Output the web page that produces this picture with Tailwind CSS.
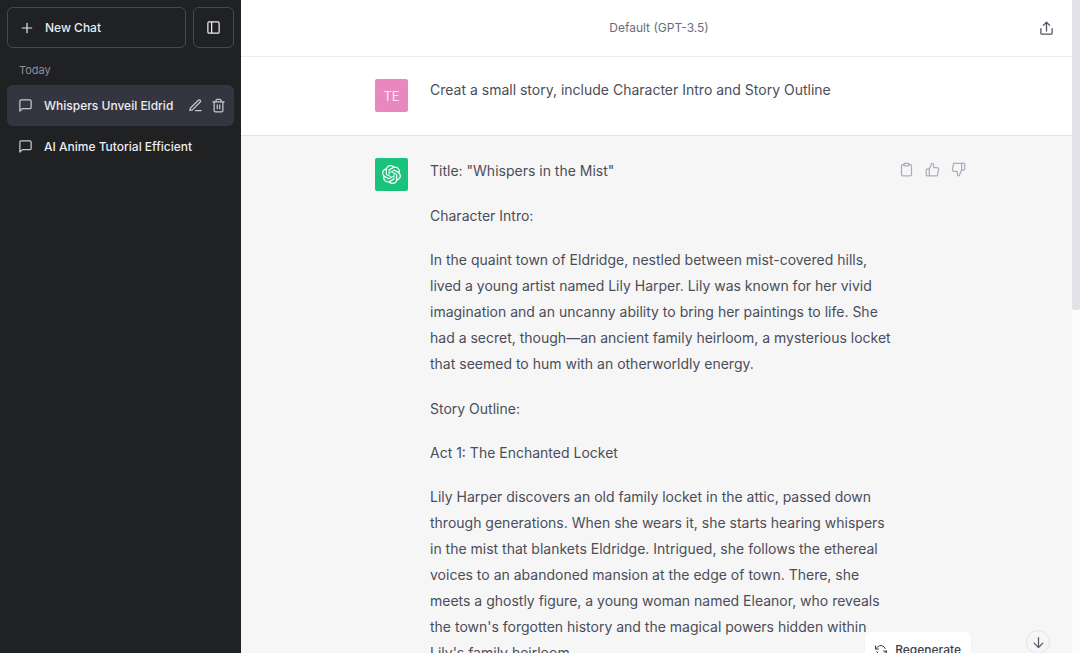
<!DOCTYPE html>
<html lang="en">
<head>
    <meta charset="UTF-8">
    <meta name="viewport" content="width=device-width, initial-scale=1.0">
    <title>Whispers Unveil Eldrid</title>
    <script src="https://cdn.jsdelivr.net/npm/@tailwindcss/browser@4"></script>
</head>
<body class="flex h-screen overflow-hidden bg-white font-['Inter','Liberation_Sans',sans-serif] text-[14px] leading-[26px] text-[#4b4d58]">
    <!-- Sidebar -->
    <aside class="w-[241px] shrink-0 bg-[#202123] p-[7px] text-[#ececf1]">
        <div class="flex gap-[7px]">
            <button class="flex h-[41px] flex-1 items-center gap-[11px] rounded-md border border-[#47484c] pl-3 text-[12px] font-medium">
                <svg class="size-[14px]" viewBox="0 0 24 24" fill="none" stroke="currentColor" stroke-width="2" stroke-linecap="round"><path d="M12 4v16M4 12h16"/></svg>
                New Chat
            </button>
            <button class="flex size-[41px] items-center justify-center rounded-md border border-[#47484c]" aria-label="Hide sidebar">
                <svg class="size-[15px]" viewBox="0 0 24 24" fill="none" stroke="currentColor" stroke-width="2"><rect x="3" y="3" width="18" height="18" rx="2"/><path d="M9 3v18"/></svg>
            </button>
        </div>
        <h2 class="mt-[14px] mb-[7px] pl-3 text-[11px] leading-4 text-[#8e8ea0]">Today</h2>
        <nav class="text-[12px] font-medium">
            <div class="flex h-[41px] items-center rounded-md bg-[#343541] pr-2">
                <a href="#" class="flex flex-1 items-center gap-[11px] pl-[11px] whitespace-nowrap">
                    <svg class="size-[15px] text-[#c5c5d2]" viewBox="0 0 24 24" fill="none" stroke="currentColor" stroke-width="2" stroke-linejoin="round"><path d="M21 15a2 2 0 0 1-2 2H7l-4 4V5a2 2 0 0 1 2-2h14a2 2 0 0 1 2 2z"/></svg>
                    Whispers Unveil Eldrid
                </a>
                <button class="mr-2 text-[#c5c5d2]" aria-label="Rename">
                    <svg class="size-[15px]" viewBox="0 0 24 24" fill="none" stroke="currentColor" stroke-width="2" stroke-linecap="round" stroke-linejoin="round"><path d="M12 20h9"/><path d="M16.5 3.5a2.121 2.121 0 0 1 3 3L7 19l-4 1 1-4L16.500 3.500z"/></svg>
                </button>
                <button class="text-[#c5c5d2]" aria-label="Delete">
                    <svg class="size-[15px]" viewBox="0 0 24 24" fill="none" stroke="currentColor" stroke-width="2" stroke-linecap="round" stroke-linejoin="round"><path d="M3 6h18"/><path d="M19 6v14a2 2 0 0 1-2 2H7a2 2 0 0 1-2-2V6m3 0V4a2 2 0 0 1 2-2h4a2 2 0 0 1 2 2v2"/><path d="M10 11v6M14 11v6"/></svg>
                </button>
            </div>
            <a href="#" class="flex h-[41px] items-center gap-[11px] pl-[11px]">
                <svg class="size-[15px] text-[#c5c5d2]" viewBox="0 0 24 24" fill="none" stroke="currentColor" stroke-width="2" stroke-linejoin="round"><path d="M21 15a2 2 0 0 1-2 2H7l-4 4V5a2 2 0 0 1 2-2h14a2 2 0 0 1 2 2z"/></svg>
                AI Anime Tutorial Efficient
            </a>
        </nav>
    </aside>

    <!-- Conversation -->
    <main class="relative flex flex-1 flex-col overflow-hidden">
        <header class="flex h-[57px] shrink-0 items-center border-b border-[#ececf1] pr-[18px] pl-[38px]">
            <h1 class="flex-1 text-center text-[12px] text-[#6b6c7b]">Default (GPT-3.5)</h1>
            <button class="text-[#50515c]" aria-label="Share">
                <svg class="size-[15px]" viewBox="0 0 24 24" fill="none" stroke="currentColor" stroke-width="2" stroke-linecap="round" stroke-linejoin="round"><path d="M3 12v7a2 2 0 0 0 2 2h14a2 2 0 0 0 2-2v-7"/><path d="M7 7l5-5 5 5M12 2v14"/></svg>
            </button>
        </header>

        <!-- User message -->
        <article class="flex h-[79px] shrink-0 justify-center border-b border-[#e3e3e8] pt-[22px]">
            <div class="flex w-[563px] gap-[22px]">
                <div class="flex size-[33px] shrink-0 items-center justify-center rounded-xs bg-[#e888bf] text-[13px] text-white/80">TE</div>
                <p class="-mt-[2px]">Creat a small story, include Character Intro and Story Outline</p>
            </div>
        </article>

        <!-- Assistant message -->
        <article class="flex shrink-0 justify-center bg-[#f6f6f7] pt-[22px] pb-8">
            <div class="flex w-[563px] gap-[22px]">
                <div class="flex size-[33px] shrink-0 items-center justify-center rounded-xs bg-[#19c37d] text-white">
                    <svg class="size-[19px]" viewBox="0 0 24 24" fill="currentColor"><path d="M22.2819 9.8211a5.9847 5.9847 0 0 0-.5157-4.9108 6.0462 6.0462 0 0 0-6.5098-2.9A6.0651 6.0651 0 0 0 4.9807 4.1818a5.9847 5.9847 0 0 0-3.9977 2.9 6.0462 6.0462 0 0 0 .7427 7.0966 5.98 5.98 0 0 0 .511 4.9107 6.051 6.051 0 0 0 6.5146 2.9001A5.9847 5.9847 0 0 0 13.2599 24a6.0557 6.0557 0 0 0 5.7718-4.2058 5.9894 5.9894 0 0 0 3.9977-2.9001 6.0557 6.0557 0 0 0-.7475-7.073zm-9.022 12.6081a4.4755 4.4755 0 0 1-2.8764-1.0408l.1419-.0804 4.7783-2.7582a.7948.7948 0 0 0 .3927-.6813v-6.7369l2.02 1.1686a.071.071 0 0 1 .038.052v5.5826a4.504 4.504 0 0 1-4.4945 4.4944zm-9.6607-4.1254a4.4708 4.4708 0 0 1-.5346-3.0137l.142.0852 4.783 2.7582a.7712.7712 0 0 0 .7806 0l5.8428-3.3685v2.3324a.0804.0804 0 0 1-.0332.0615L9.74 19.9502a4.4992 4.4992 0 0 1-6.1408-1.6464zM2.3408 7.8956a4.485 4.485 0 0 1 2.3655-1.9728V11.6a.7664.7664 0 0 0 .3879.6765l5.8144 3.3543-2.0201 1.1685a.0757.0757 0 0 1-.071 0l-4.8303-2.7865A4.504 4.504 0 0 1 2.3408 7.872zm16.5963 3.8558L13.1038 8.364 15.1192 7.2a.0757.0757 0 0 1 .071 0l4.8303 2.7913a4.4944 4.4944 0 0 1-.6765 8.1042v-5.6772a.79.79 0 0 0-.407-.667zm2.0107-3.0231l-.142-.0852-4.7735-2.7818a.7759.7759 0 0 0-.7854 0L9.409 9.2297V6.8974a.0662.0662 0 0 1 .0284-.0615l4.8303-2.7866a4.4992 4.4992 0 0 1 6.6802 4.66zM8.3065 12.863l-2.02-1.1638a.0804.0804 0 0 1-.038-.0567V6.0742a4.4992 4.4992 0 0 1 7.3757-3.4537l-.142.0805L8.704 5.459a.7948.7948 0 0 0-.3927.6813zm1.0976-2.3654l2.602-1.4998 2.6069 1.4998v2.9994l-2.5974 1.4997-2.6067-1.4997Z"/></svg>
                </div>
                <div class="flex flex-1 flex-col gap-[19px] whitespace-nowrap">
                    <p>Title: "Whispers in the Mist"</p>
                    <section class="flex flex-col gap-[18px]">
                        <p>Character Intro:</p>
                        <p>In the quaint town of Eldridge, nestled between mist-covered hills,<br>
                        lived a young artist named Lily Harper. Lily was known for her vivid<br>
                        imagination and an uncanny ability to bring her paintings to life. She<br>
                        had a secret, though—an ancient family heirloom, a mysterious locket<br>
                        that seemed to hum with an otherworldly energy.</p>
                    </section>
                    <section class="flex flex-col gap-[18px]">
                        <p>Story Outline:</p>
                        <p>Act 1: The Enchanted Locket</p>
                        <p>Lily Harper discovers an old family locket in the attic, passed down<br>
                        through generations. When she wears it, she starts hearing whispers<br>
                        in the mist that blankets Eldridge. Intrigued, she follows the ethereal<br>
                        voices to an abandoned mansion at the edge of town. There, she<br>
                        meets a ghostly figure, a young woman named Eleanor, who reveals<br>
                        the town's forgotten history and the magical powers hidden within<br>
                        Lily's family heirloom.</p>
                    </section>
                </div>
                <div class="-mr-7 -ml-[22px] flex h-[22px] shrink-0 items-center gap-[11px] text-[#acacbe]">
                    <button aria-label="Copy">
                        <svg class="size-[15px]" viewBox="0 0 24 24" fill="none" stroke="currentColor" stroke-width="2" stroke-linecap="round" stroke-linejoin="round"><path d="M16 4h2a2 2 0 0 1 2 2v14a2 2 0 0 1-2 2H6a2 2 0 0 1-2-2V6a2 2 0 0 1 2-2h2"/><rect x="8" y="2" width="8" height="4" rx="1"/></svg>
                    </button>
                    <button aria-label="Good response">
                        <svg class="size-[15px]" viewBox="0 0 24 24" fill="none" stroke="currentColor" stroke-width="2" stroke-linecap="round" stroke-linejoin="round"><path d="M14 9V5a3 3 0 0 0-3-3l-4 9v11h11.280a2 2 0 0 0 2-1.700l1.380-9a2 2 0 0 0-2-2.300zM7 22H4a2 2 0 0 1-2-2v-7a2 2 0 0 1 2-2h3"/></svg>
                    </button>
                    <button aria-label="Bad response">
                        <svg class="size-[15px]" viewBox="0 0 24 24" fill="none" stroke="currentColor" stroke-width="2" stroke-linecap="round" stroke-linejoin="round"><path d="M10 15v4a3 3 0 0 0 3 3l4-9V2H5.720a2 2 0 0 0-2 1.700l-1.380 9a2 2 0 0 0 2 2.300zm7-13h2.670A2.310 2.310 0 0 1 22 4v7a2.310 2.310 0 0 1-2.330 2H17"/></svg>
                    </button>
                </div>
            </div>
        </article>

        <!-- Floating controls -->
        <button class="absolute right-[101px] -bottom-[14px] flex h-[35px] items-center gap-2 rounded-md bg-white px-[10px] text-[12px] font-medium text-[#40414f] shadow-xs">
            <svg class="size-3" viewBox="0 0 24 24" fill="none" stroke="currentColor" stroke-width="2" stroke-linecap="round" stroke-linejoin="round"><path d="M1 4v6h6M23 20v-6h-6"/><path d="M20.490 9A9 9 0 0 0 5.640 5.640L1 10m22 4l-4.640 4.360A9 9 0 0 1 3.510 15"/></svg>
            Regenerate
        </button>
        <button class="absolute right-[22px] -bottom-px flex size-6 items-center justify-center rounded-full border border-[#e2e2e6] bg-[#f6f6f7] text-[#565869]" aria-label="Scroll to bottom">
            <svg class="size-[15px]" viewBox="0 0 24 24" fill="none" stroke="currentColor" stroke-width="2" stroke-linecap="round" stroke-linejoin="round"><path d="M12 4v16M5 13l7 7 7-7"/></svg>
        </button>
    </main>

    <!-- Scroll rail -->
    <div class="w-2 shrink-0 bg-[#fcfcfd]">
        <div class="h-[310px] rounded-b-xs bg-[#e2e2ea]"></div>
    </div>
</body>
</html>
